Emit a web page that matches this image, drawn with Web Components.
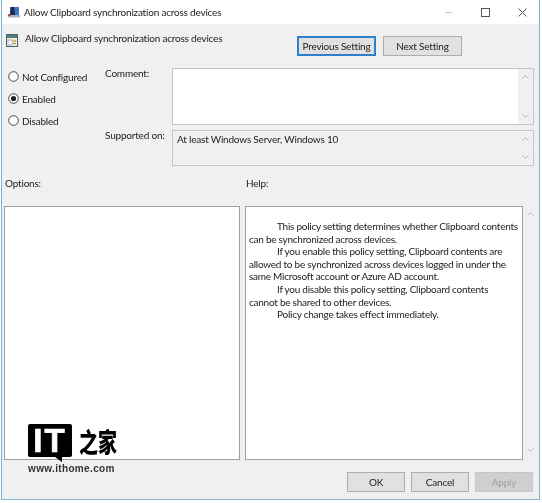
<!DOCTYPE html>
<html>
<head>
<meta charset="utf-8">
<title>Allow Clipboard synchronization across devices</title>
<style>
    html, body { margin: 0; padding: 0; background: #fff; }
    body { font: 10px Lato, Roboto, sans-serif; letter-spacing: -.2px; color: #222; }
</style>
</head>
<body>

<policy-window>
    <title-bar slot="title">Allow Clipboard synchronization across devices</title-bar>

    <setting-head>Allow Clipboard synchronization across devices</setting-head>

    <state-radios slot="radios">
        <state-radio>Not Configured</state-radio>
        <state-radio checked>Enabled</state-radio>
        <state-radio>Disabled</state-radio>
    </state-radios>

    <field-row slot="comment" label="Comment:" height="57"></field-row>
    <field-row slot="supported" label="Supported on:" height="36" grey>At least Windows Server, Windows 10</field-row>

    <two-panes slot="panes">
        <help-text>
            <p>This policy setting determines whether Clipboard contents<br>can be synchronized across devices.</p>
            <p>If you enable this policy setting, Clipboard contents are<br>allowed to be synchronized across devices logged in under the<br>same Microsoft account or Azure AD account.</p>
            <p>If you disable this policy setting, Clipboard contents<br>cannot be shared to other devices.</p>
            <p>Policy change takes effect immediately.</p>
        </help-text>
    </two-panes>

    <dlg-button slot="footer">OK</dlg-button>
    <dlg-button slot="footer">Cancel</dlg-button>
    <dlg-button slot="footer" disabled>Apply</dlg-button>

    <site-mark slot="mark"></site-mark>
</policy-window>

<script>
const chevrons = `
    <svg class="up" width="7" height="4" viewBox="0 0 7 4"><path d="M.5 3.5 3.5.5l3 3" fill="none" stroke="#b4b4b4"/></svg>
    <svg class="down" width="7" height="4" viewBox="0 0 7 4"><path d="M.5.5l3 3 3-3" fill="none" stroke="#b4b4b4"/></svg>
`;

class PolicyWindow extends HTMLElement {
    connectedCallback() {
        const shadow = this.attachShadow({ mode: 'open' });
        shadow.innerHTML = `
            <style>
                :host {
                    display: flex;
                    flex-direction: column;
                    position: relative;
                    box-sizing: border-box;
                    width: 539px;
                    height: 500px;
                    margin-left: 1px;
                    border: 1px solid #7db5d6;
                    border-top: 0;
                    background: #f0f0f0;
                    filter: blur(.3px);
                }
                .top {
                    display: grid;
                    grid-template-columns: 103px 1fr;
                    padding-top: 4px;
                }
                .fields { display: flex; flex-direction: column; gap: 5px; padding-right: 5px; }
                .footer {
                    display: flex;
                    justify-content: flex-end;
                    gap: 6px;
                    padding: 12px 6px 0 0;
                }
                .mark { position: absolute; left: 26px; bottom: 24px; }
            </style>
            <slot name="title"></slot>
            <slot></slot>
            <div class="top">
                <div><slot name="radios"></slot></div>
                <div class="fields">
                    <slot name="comment"></slot>
                    <slot name="supported"></slot>
                </div>
            </div>
            <slot name="panes"></slot>
            <div class="footer"><slot name="footer"></slot></div>
            <div class="mark"><slot name="mark"></slot></div>
        `;
    }
}

class TitleBar extends HTMLElement {
    connectedCallback() {
        const shadow = this.attachShadow({ mode: 'open' });
        shadow.innerHTML = `
            <style>
                :host {
                    display: flex;
                    align-items: center;
                    height: 24px;
                    background: #fff;
                    padding-left: 6px;
                    flex: none;
                }
                .icon { margin-right: 4px; flex: none; }
                .text { flex: 1; }
                .ctls { display: flex; gap: 4px; }
                .ctl { display: flex; align-items: center; justify-content: center; width: 33px; height: 24px; }
            </style>
            <svg class="icon" width="12" height="12" viewBox="0 0 12 12">
                <rect x="0" y="9" width="12" height="2.5" fill="#a9b6c6"/>
                <rect x="2" y="1" width="9" height="8" fill="#3f77c4"/>
                <circle cx="4.5" cy="3" r="2.2" fill="#1d2c4d"/>
                <rect x="2" y="5" width="5" height="4" fill="#1d2c4d"/>
                <rect x="0" y="8" width="3" height="2" fill="#b5553f"/>
            </svg>
            <span class="text"><slot></slot></span>
            <div class="ctls">
                <div class="ctl"><svg width="9" height="9"><path d="M1 4.5h7" stroke="#c9c9c9"/></svg></div>
                <div class="ctl"><svg width="9" height="9"><rect x=".5" y=".5" width="8" height="8" fill="none" stroke="#555"/></svg></div>
                <div class="ctl"><svg width="9" height="9"><path d="M.5.5l8 8M8.5.5l-8 8" stroke="#555"/></svg></div>
            </div>
        `;
    }
}

class SettingHead extends HTMLElement {
    connectedCallback() {
        const shadow = this.attachShadow({ mode: 'open' });
        shadow.innerHTML = `
            <style>
                :host { display: flex; height: 40px; padding-left: 4px; flex: none; }
                .icon { margin: 10px 7px 0 0; flex: none; }
                .text { padding-top: 8px; flex: 1; }
                .btns { display: flex; gap: 7px; padding: 12px 77px 0 0; }
                .btn {
                    box-sizing: border-box;
                    width: 79px;
                    height: 20px;
                    display: flex;
                    align-items: center;
                    justify-content: center;
                    white-space: nowrap;
                    background: #e1e1e1;
                    border: 1px solid #adadad;
                }
                .btn.focus { border: 2px solid #2f7fcb; }
            </style>
            <svg class="icon" width="12" height="13" viewBox="0 0 12 13">
                <rect x=".5" y=".5" width="11" height="12" fill="#f3ecd6" stroke="#4f6468"/>
                <rect x="1" y="1" width="10" height="3" fill="#4f7f7a"/>
                <rect x="2" y="6" width="4" height="5" fill="#fff" stroke="#78909c" stroke-width=".6"/>
                <rect x="7" y="6" width="3" height="2" fill="#d9b95f"/>
                <rect x="7" y="9" width="3" height="1" fill="#7f8f7e"/>
            </svg>
            <div class="text"><slot></slot></div>
            <div class="btns">
                <div class="btn focus">Previous Setting</div>
                <div class="btn">Next Setting</div>
            </div>
        `;
    }
}

class StateRadios extends HTMLElement {
    connectedCallback() {
        const shadow = this.attachShadow({ mode: 'open' });
        shadow.innerHTML = `
            <style>
                :host { display: flex; flex-direction: column; gap: 7px; padding: 1px 0 0 6px; }
            </style>
            <slot></slot>
        `;
    }
}

class StateRadio extends HTMLElement {
    connectedCallback() {
        const shadow = this.attachShadow({ mode: 'open' });
        const dot = this.hasAttribute('checked') ? '<circle cx="5.5" cy="5.5" r="2.6" fill="#222"/>' : '';
        shadow.innerHTML = `
            <style>
                :host { display: flex; align-items: center; gap: 3px; height: 15px; }
            </style>
            <svg width="11" height="11" viewBox="0 0 11 11">
                <circle cx="5.5" cy="5.5" r="4.8" fill="#fff" stroke="#444"/>${dot}
            </svg>
            <span><slot></slot></span>
        `;
    }
}

class FieldRow extends HTMLElement {
    connectedCallback() {
        const shadow = this.attachShadow({ mode: 'open' });
        const h = this.getAttribute('height');
        shadow.innerHTML = `
            <style>
                :host { display: grid; grid-template-columns: 67px 1fr; }
                .label { line-height: 10px; white-space: nowrap; }
                .box {
                    box-sizing: border-box;
                    position: relative;
                    height: ${h}px;
                    border: 1px solid #c4c4c4;
                    background: ${this.hasAttribute('grey') ? '#f0f0f0' : '#fff'};
                    padding: 2px 4px;
                }
                .bar {
                    position: absolute;
                    top: 0; right: 0; bottom: 0;
                    width: 15px;
                    background: #f0f0f0;
                    display: flex;
                    flex-direction: column;
                    align-items: center;
                    justify-content: space-between;
                    padding: 6px 0;
                    box-sizing: border-box;
                }
            </style>
            <div class="label">${this.getAttribute('label')}</div>
            <div class="box"><slot></slot><div class="bar">${chevrons}</div></div>
        `;
    }
}

class TwoPanes extends HTMLElement {
    connectedCallback() {
        const shadow = this.attachShadow({ mode: 'open' });
        shadow.innerHTML = `
            <style>
                :host {
                    display: grid;
                    grid-template-columns: 236px 1fr;
                    grid-template-rows: 40px 254px;
                    column-gap: 5px;
                    padding: 0 2px 0 2px;
                    flex: none;
                }
                .head { padding: 11px 0 0 1px; }
                .box {
                    box-sizing: border-box;
                    border: 1px solid #a0a0a0;
                    background: #fff;
                }
                .right { display: flex; }
                .right .box { flex: 1; padding-top: 13px; }
                .bar {
                    width: 14px;
                    display: flex;
                    flex-direction: column;
                    align-items: center;
                    justify-content: space-between;
                    padding: 6px 0 8px;
                    box-sizing: border-box;
                }
            </style>
            <div class="head">Options:</div>
            <div class="head">Help:</div>
            <div class="box"></div>
            <div class="right">
                <div class="box"><slot></slot></div>
                <div class="bar">${chevrons}</div>
            </div>
        `;
    }
}

class HelpText extends HTMLElement {
    connectedCallback() {
        const shadow = this.attachShadow({ mode: 'open' });
        shadow.append(...this.childNodes);
        const style = document.createElement('style');
        style.textContent = `
            :host { display: block; padding-left: 3px; line-height: 12.6px; letter-spacing: -.25px; white-space: nowrap; }
            p { margin: 0; text-indent: 28px; }
        `;
        shadow.prepend(style);
    }
}

class DlgButton extends HTMLElement {
    connectedCallback() {
        const shadow = this.attachShadow({ mode: 'open' });
        const off = this.hasAttribute('disabled');
        shadow.innerHTML = `
            <style>
                :host {
                    display: flex;
                    align-items: center;
                    justify-content: center;
                    box-sizing: border-box;
                    width: 58px;
                    height: 20px;
                    background: ${off ? '#cfcfcf' : '#e1e1e1'};
                    border: 1px solid ${off ? '#c4c4c4' : '#adadad'};
                    color: ${off ? '#a0a0a0' : '#222'};
                }
            </style>
            <slot></slot>
        `;
    }
}

class SiteMark extends HTMLElement {
    connectedCallback() {
        const shadow = this.attachShadow({ mode: 'open' });
        shadow.innerHTML = `
            <style>
                :host { display: block; width: 100px; letter-spacing: 0; }
                .top { display: flex; align-items: flex-start; gap: 7px; }
                .it {
                    position: relative;
                    width: 44px;
                    height: 33px;
                    background: #000;
                    border-radius: 2px;
                    color: #fff;
                    font: bold 33px/33px "Liberation Sans", sans-serif;
                    -webkit-text-stroke: .7px #fff;
                    text-align: center;
                    letter-spacing: 2px;
                }
                .tail {
                    position: absolute;
                    right: 10px; bottom: -5px;
                    width: 0; height: 0;
                    border-left: 7px solid transparent;
                    border-top: 5px solid #000;
                }
                .cn {
                    font: 900 19px/33px "Noto Sans CJK SC", sans-serif;
                    color: #000;
                    white-space: nowrap;
                    transform: scaleY(1.4);
                }
                .url {
                    font: bold 10px/12px "Liberation Sans", sans-serif;
                    color: #333;
                    letter-spacing: .35px;
                    margin-top: 6px;
                }
            </style>
            <div class="top">
                <div class="it">IT<div class="tail"></div></div>
                <div class="cn">之家</div>
            </div>
            <div class="url">www.ithome.com</div>
        `;
    }
}

customElements.define('policy-window', PolicyWindow);
customElements.define('title-bar', TitleBar);
customElements.define('setting-head', SettingHead);
customElements.define('state-radios', StateRadios);
customElements.define('state-radio', StateRadio);
customElements.define('field-row', FieldRow);
customElements.define('two-panes', TwoPanes);
customElements.define('help-text', HelpText);
customElements.define('dlg-button', DlgButton);
customElements.define('site-mark', SiteMark);
</script>
</body>
</html>
